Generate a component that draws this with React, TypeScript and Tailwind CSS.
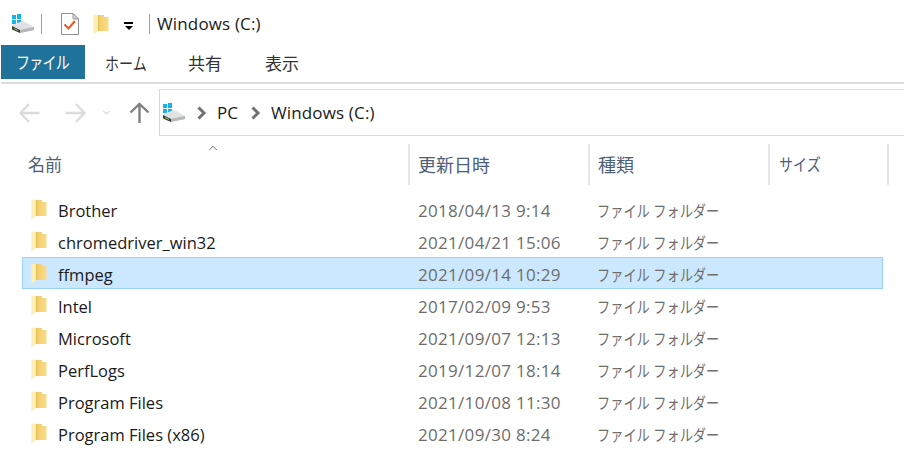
import React from 'react';
import { ChevronDown, ChevronUp } from 'lucide-react';

const FONT = "font-['Open_Sans','Noto_Sans_CJK_JP',sans-serif]";

const rows = [
  { name: 'Brother', date: '2018/04/13 9:14' },
  { name: 'chromedriver_win32', date: '2021/04/21 15:06' },
  { name: 'ffmpeg', date: '2021/09/14 10:29', selected: true },
  { name: 'Intel', date: '2017/02/09 9:53' },
  { name: 'Microsoft', date: '2021/09/07 12:13' },
  { name: 'PerfLogs', date: '2019/12/07 18:14' },
  { name: 'Program Files', date: '2021/10/08 11:30' },
  { name: 'Program Files (x86)', date: '2021/09/30 8:24' },
];

function DriveIcon() {
  return (
    <svg width="23" height="20" viewBox="0 0 23 20" className="shrink-0">
      <rect x="0" y="1" width="4" height="4" fill="#12b4ee" />
      <rect x="5" y="0" width="4" height="5" fill="#12b4ee" />
      <rect x="0" y="6" width="4" height="4" fill="#12b4ee" />
      <rect x="5" y="6" width="4" height="4" fill="#12b4ee" />
      <path d="M0 11 L11 7 L22 13 L22 16 L8 19 L0 15.5 Z" fill="#dfe1e2" />
      <path d="M8 16 L22 13 L22 16 L8 19 Z" fill="#b4b7b8" />
      <path d="M0 12 L8 16 L8 19 L0 15.5 Z" fill="#3a3f40" />
      <path d="M2 14 L6 16 L6 17 L2 15 Z" fill="#8fd14f" />
    </svg>
  );
}

function FolderIcon({ id }: { id: string }) {
  return (
    <svg width="16" height="21" viewBox="0 0 16 21" className="shrink-0">
      <defs>
        <linearGradient id={id} x1="0" x2="1" y1="0" y2="0">
          <stop offset="0" stopColor="#f0c860" />
          <stop offset="1" stopColor="#fbdc8b" />
        </linearGradient>
      </defs>
      <path d="M3 1 H11 V3 H15.5 V17 H3 Z" fill={`url(#${id})`} />
      <path d="M0.5 0.5 L5 1 V17 L0.5 20.5 Z" fill="#fdeeb5" />
      <path d="M5 1 H5.8 V17 L5 17 Z" fill="#e3b850" />
    </svg>
  );
}

function CheckDocIcon() {
  return (
    <svg width="18" height="22" viewBox="0 0 18 22" className="shrink-0">
      <path d="M0.5 0.5 H12 L17.5 6 V21.5 H0.5 Z" fill="#fff" stroke="#8f8f8f" />
      <path d="M12 0.5 V6 H17.5 Z" fill="#d8d8d8" stroke="#9b9b9b" />
      <path d="M3.5 11.5 L7.5 15.5 L14 8" fill="none" stroke="#ea5a1e" strokeWidth="2" />
    </svg>
  );
}

function NavArrow({ dir }: { dir: 'left' | 'right' | 'up' }) {
  const turn = dir === 'right' ? 'rotate-180' : dir === 'up' ? 'rotate-90' : '';
  return (
    <svg width="21" height="20" viewBox="0 0 21 20" className={`shrink-0 ${turn}`}>
      <path d="M0.5 10 H20.5 M10 1 L1.5 10 L10 19" fill="none" stroke="currentColor" strokeWidth="2.4" />
    </svg>
  );
}

function Crumb() {
  return (
    <svg width="10" height="14" viewBox="0 0 10 14" className="shrink-0">
      <path d="M1.5 1.5 L7 7 L1.5 12.5" fill="none" stroke="#707070" strokeWidth="3" />
    </svg>
  );
}

// kana in the reference are narrower than Noto's, so squeeze them
function Kana({ children }: { children: React.ReactNode }) {
  return <span className="inline-block whitespace-nowrap origin-left scale-x-[0.825]">{children}</span>;
}

export default function App() {
  return (
    <div className={`${FONT} w-[904px] h-[454px] overflow-hidden bg-white text-[17px] leading-[22px] text-[#1a1a1a]`}>
      {/* Title bar */}
      <div className="flex items-center h-[45px] pt-[3px]">
        <div className="ml-[12px]"><DriveIcon /></div>
        <div className="ml-[6px] w-px h-[20px] bg-[#a0a0a0]" />
        <div className="ml-[19px]"><CheckDocIcon /></div>
        <div className="ml-[14px]"><FolderIcon id="qat" /></div>
        <div className="ml-[15px] flex flex-col items-center gap-[2px] pt-[3px]">
          <div className="w-[9px] h-[2px] bg-black" />
          <div className="w-0 h-0 border-x-[4px] border-x-transparent border-t-[4px] border-t-black" />
        </div>
        <div className="ml-[16px] w-px h-[20px] bg-[#a0a0a0]" />
        <div className="ml-[7px] tracking-[0.15px]">Windows (C:)</div>
      </div>

      {/* Ribbon tabs */}
      <div className="flex h-[34px] ml-px">
        <div className="w-[84px] pl-[15px] pt-[2px] flex items-center bg-[#1f7299] text-white tracking-[-0.9px]"><Kana>ファイル</Kana></div>
        <div className="ml-[20px] w-[41px] pt-[4px] flex items-center text-[#333]"><Kana>ホーム</Kana></div>
        <div className="ml-[42px] w-[34px] pt-[4px] flex items-center text-[#333]">共有</div>
        <div className="ml-[43px] w-[35px] pt-[4px] flex items-center text-[#333]">表示</div>
      </div>
      <div className="mt-[3px] ml-px h-[2px] bg-[#dcdcdc]" />

      {/* Address bar */}
      <div className="flex h-[47px] mt-[5px]">
        <div className="w-[159px] flex items-center text-[#dcdcdc]">
          <div className="ml-[19px]"><NavArrow dir="left" /></div>
          <div className="ml-[25px]"><NavArrow dir="right" /></div>
          <ChevronDown size={11} className="ml-[15px]" strokeWidth={3} />
          <div className="ml-[17px] text-[#808080]"><NavArrow dir="up" /></div>
        </div>
        <div className="flex-1 flex items-center border border-r-0 border-[#d9d9d9]">
          <div className="ml-[3px]"><DriveIcon /></div>
          <div className="ml-[11px]"><Crumb /></div>
          <span className="ml-[10px]">PC</span>
          <div className="ml-[13px]"><Crumb /></div>
          <span className="ml-[10px] tracking-[0.15px]">Windows (C:)</span>
        </div>
      </div>

      {/* Column header */}
      <div className="relative flex h-[41px] mt-[8px] text-[#4c607a]">
        <ChevronUp size={14} strokeWidth={1.5} className="absolute left-[206px] top-[-3px] text-[#555]" />
        <div className="w-[408px] pl-[28px] flex items-center">名前</div>
        <div className="w-[180px] pl-[8px] flex items-center border-l-2 border-[#e6e6e6] text-[18px]">更新日時</div>
        <div className="w-[180px] pl-[8px] flex items-center border-l-2 border-[#e6e6e6] text-[18px]">種類</div>
        <div className="w-[121px] pl-[9px] flex items-center border-x-2 border-[#e6e6e6]"><Kana>サイズ</Kana></div>
      </div>

      {/* File rows */}
      <div className="mt-[8px] flex flex-col">
        {rows.map((r, i) => (
          <div
            key={r.name}
            className={`flex items-center h-[32px] ml-[22px] w-[861px] border ${r.selected ? 'bg-[#cce8ff] border-[#99d1ff]' : 'border-transparent'}`}
          >
            <div className="ml-[8px] w-[27px]"><FolderIcon id={`f${i}`} /></div>
            <div className="w-[360px] pt-[4px] text-[16.5px]">{r.name}</div>
            <div className="w-[179px] pt-[4px] text-[#6d6d6d] tracking-[0.3px]">{r.date}</div>
            <div className="pt-[4px] text-[#6d6d6d] text-[16px]"><Kana>ファイル フォルダー</Kana></div>
          </div>
        ))}
      </div>
    </div>
  );
}
